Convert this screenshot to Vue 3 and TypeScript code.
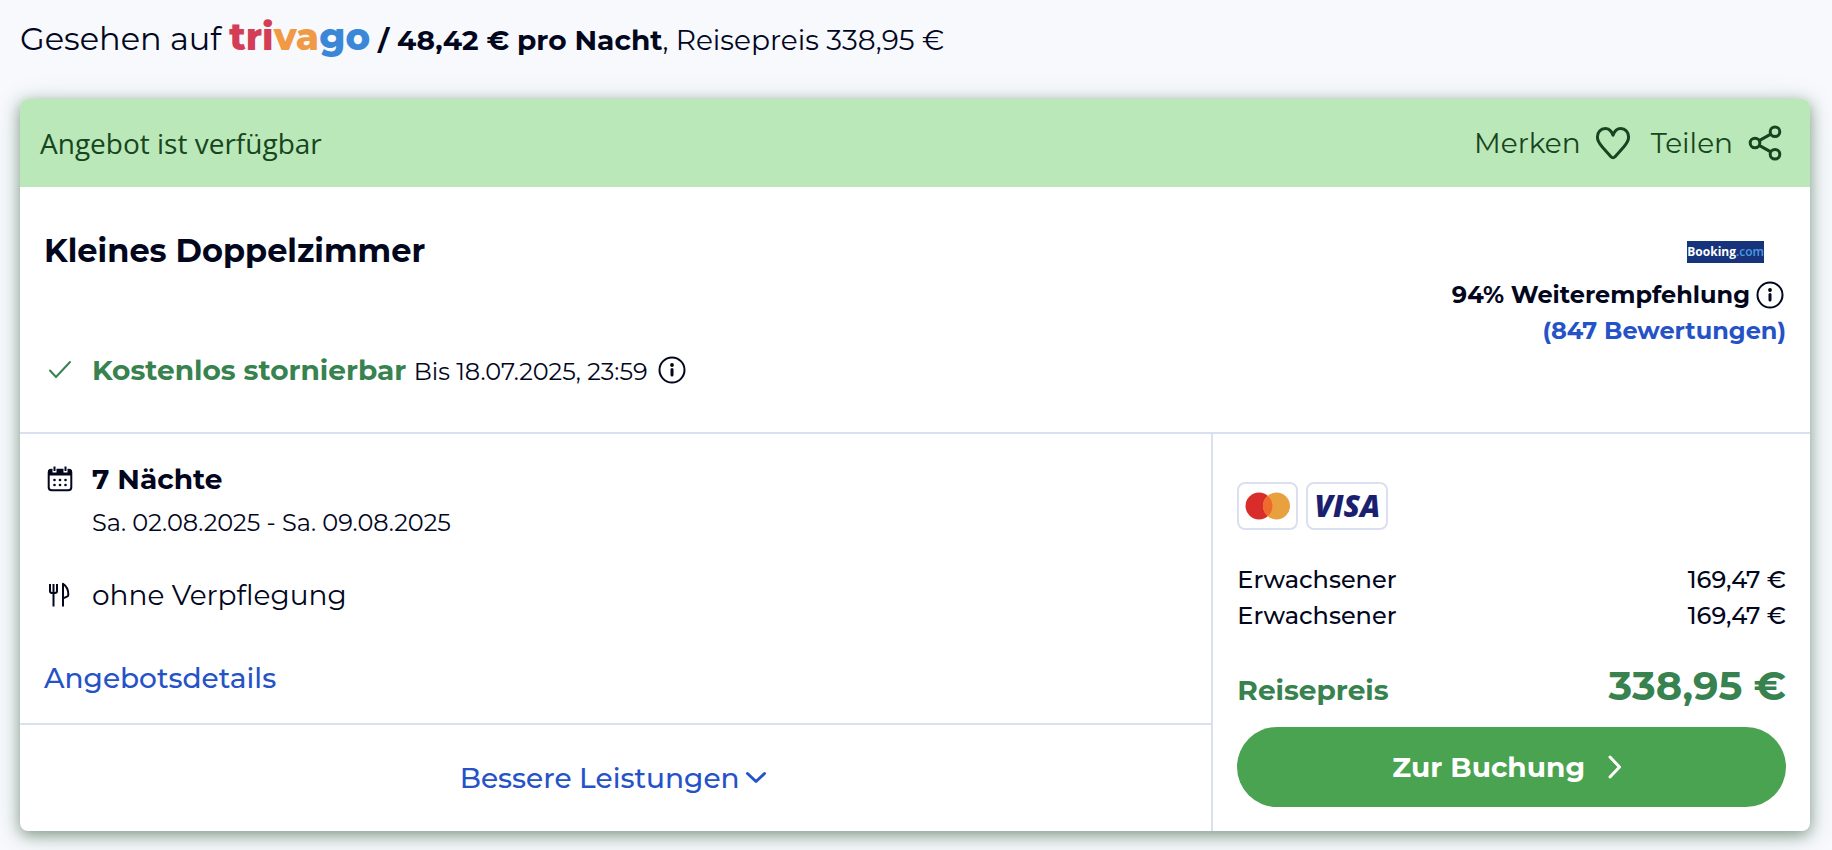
<script setup lang="ts">
interface Traveller {
  label: string
  price: string
}

const travellers: Traveller[] = [
  { label: 'Erwachsener', price: '169,47 €' },
  { label: 'Erwachsener', price: '169,47 €' },
]
</script>

<template>
  <main class="page">
    <header class="seen">
      <span class="seen-on">Gesehen auf</span>
      <span class="trivago"><span class="tri">tri</span><span class="va">va</span><span class="go">go</span></span>
      <p class="seen-price"><strong>/ 48,42 € pro Nacht</strong>, Reisepreis 338,95 €</p>
    </header>

    <article class="card">
      <div class="status">
        <span class="status-text">Angebot ist verfügbar</span>
        <div class="status-actions">
          <button type="button" class="action">
            Merken
            <svg class="action-icon" viewBox="0 0 36 36" aria-hidden="true">
              <path d="M18 10.2C16.4 5.6 13.6 3.6 10.3 3.6 5.6 3.6 2.4 7.3 2.4 12c0 4 2.2 6.9 4.9 9.9l8.9 10c1 1.200 2.600 1.200 3.600 0l8.900-10c2.700-3 4.900-5.900 4.900-9.900 0-4.700-3.200-8.400-7.900-8.400-3.300 0-6.100 2-7.700 6.600z" />
            </svg>
          </button>
          <button type="button" class="action">
            Teilen
            <svg class="action-icon" viewBox="0 0 36 36" aria-hidden="true">
              <circle cx="28" cy="6.800" r="4.800" />
              <circle cx="8" cy="18" r="4.800" />
              <circle cx="28" cy="29.200" r="4.800" />
              <path d="M12.200 15.600l11.600-6.500M12.200 20.400l11.600 6.500" />
            </svg>
          </button>
        </div>
      </div>

      <section class="room">
        <div class="room-main">
          <h1 class="room-title">Kleines Doppelzimmer</h1>
          <div class="row">
            <svg class="row-icon check" viewBox="0 0 32 32" aria-hidden="true">
              <path d="M6 16.500l6 6.500L26 8" />
            </svg>
            <p class="cancel"><strong>Kostenlos stornierbar</strong> <span>Bis 18.07.2025, 23:59</span></p>
            <button type="button" class="info info-cancel" aria-label="Information zur Stornierung">
              <svg viewBox="0 0 32 32" aria-hidden="true">
                <circle class="ring" cx="16" cy="16" r="12.500" />
                <circle cx="16" cy="11" r="1.900" />
                <path class="stem" d="M16 15.500v5.500" />
              </svg>
            </button>
          </div>
        </div>
        <div class="provider">
          <span class="booking">Booking<span class="booking-com">.com</span></span>
          <div class="recommend">
            <strong>94% Weiterempfehlung</strong>
            <button type="button" class="info" aria-label="Information zur Weiterempfehlung">
              <svg viewBox="0 0 32 32" aria-hidden="true">
                <circle class="ring" cx="16" cy="16" r="12.500" />
                <circle cx="16" cy="11" r="1.900" />
                <path class="stem" d="M16 15.500v5.500" />
              </svg>
            </button>
          </div>
          <a class="reviews" href="#bewertungen">(847 Bewertungen)</a>
        </div>
      </section>

      <div class="columns">
        <div class="left">
          <section class="stay">
            <div class="row">
              <svg class="row-icon" viewBox="0 0 32 32" aria-hidden="true">
                <rect class="line" x="4.700" y="6.700" width="22.600" height="20.600" rx="3" />
                <path d="M4 12.500V9A3 3 0 0 1 7 6h18A3 3 0 0 1 28 9v3.500z" />
                <path class="gap" d="M10.500 4v5.500M21.500 4v5.500" />
                <path class="line" d="M10.500 3.500v4.500M21.500 3.500v4.500" />
                <g>
                  <circle cx="10.500" cy="17" r="1.300" /><circle cx="16" cy="17" r="1.300" /><circle cx="21.500" cy="17" r="1.300" />
                  <circle cx="10.500" cy="22" r="1.300" /><circle cx="16" cy="22" r="1.300" /><circle cx="21.500" cy="22" r="1.300" />
                </g>
              </svg>
              <strong class="nights">7 Nächte</strong>
            </div>
            <p class="dates">Sa. 02.08.2025 - Sa. 09.08.2025</p>
            <div class="row board">
              <svg class="row-icon" viewBox="0 0 32 32" aria-hidden="true">
                <path class="line" d="M6 5v7c0 1.500 1 2 2 2h3c1 0 2-.5 2-2V5M9.500 5v22.500M19 27.500V4.800c3.500 2.200 5.500 6.200 5.300 11.200 0 1.200-.8 1.500-1.800 1.900l-3.500 1.500" />
              </svg>
              <span>ohne Verpflegung</span>
            </div>
            <a class="details" href="#angebotsdetails">Angebotsdetails</a>
          </section>
          <button type="button" class="upgrade">
            Bessere Leistungen
            <svg viewBox="0 0 24 24" aria-hidden="true"><path d="M3.500 7.500l8.500 8 8.500-8" /></svg>
          </button>
        </div>

        <section class="checkout">
          <div class="payments">
            <svg class="pay mastercard" viewBox="0 0 57 44" role="img" aria-label="Mastercard">
              <circle cx="20" cy="22" r="13.500" fill="#d92d2b" />
              <circle cx="37.500" cy="22" r="13.500" fill="#e9a13f" />
              <path d="M28.750 11.720a13.500 13.500 0 0 1 0 20.560 13.500 13.500 0 0 1 0-20.560z" fill="#ee6b2d" />
            </svg>
            <span class="pay visa">VISA</span>
          </div>
          <table class="prices">
            <tbody>
              <tr v-for="(t, i) in travellers" :key="i">
                <th scope="row">{{ t.label }}</th>
                <td>{{ t.price }}</td>
              </tr>
            </tbody>
          </table>
          <div class="total">
            <span class="total-label">Reisepreis</span>
            <span class="total-price">338,95 €</span>
          </div>
          <button type="button" class="book">
            Zur Buchung
            <svg viewBox="0 0 32 32" aria-hidden="true"><path d="M11 6l9.500 10L11 26" /></svg>
          </button>
        </section>
      </div>
    </article>
  </main>
</template>

<style>
body {
  margin: 0;
  background: #f7f9fd;
}
</style>

<style scoped>
.page {
  padding: 17px 22px 20px 20px;
  font-family: Montserrat, Inter, 'Open Sans', sans-serif;
  font-size: 28px;
  line-height: 36px;
  font-weight: 400;
  color: #02071d;
}

p,
h1 {
  margin: 0;
}

strong {
  font-weight: 700;
}

button {
  padding: 0;
  border: 0;
  background: none;
  font: inherit;
  color: inherit;
  cursor: pointer;
}

a {
  color: #2553c7;
  text-decoration: none;
}

svg {
  display: block;
  flex: none;
}

.seen {
  display: flex;
  align-items: baseline;
  gap: 8px;
}

.seen-on {
  font-size: 32px;
  line-height: 40px;
}

.trivago {
  font-size: 37px;
  line-height: 40px;
  font-weight: 800;
}

.tri {
  color: #d33d56;
}

.va {
  color: #f19a46;
}

.go {
  color: #3b87d7;
}

.card {
  margin-top: 40px;
  border-radius: 8px;
  overflow: hidden;
  background: #fff;
  box-shadow: 0 4px 16px rgba(20, 60, 20, 0.5), 0 4px 36px rgba(20, 90, 70, 0.08);
}

.status {
  display: flex;
  justify-content: space-between;
  align-items: center;
  min-height: 88px;
  padding: 0 27px 0 20px;
  background: #bae8b9;
  color: #174520;
}

.status-text {
  font-family: 'Open Sans', sans-serif;
}

.status-actions {
  display: flex;
  gap: 20px;
}

.action {
  display: flex;
  align-items: center;
  gap: 14px;
}

.action-icon {
  width: 36px;
  height: 36px;
  fill: none;
  stroke: currentColor;
  stroke-width: 3;
  stroke-linejoin: round;
}

.room {
  display: flex;
  justify-content: space-between;
  padding: 44px 24px;
  border-bottom: 2px solid #dae0ef;
}

.room-title {
  margin-bottom: 81px;
  font-size: 32px;
  line-height: 40px;
  font-weight: 700;
}

.row {
  display: flex;
  align-items: center;
}

.row-icon {
  width: 32px;
  height: 32px;
  margin-right: 16px;
  fill: currentColor;
}

.row-icon .line {
  fill: none;
  stroke: currentColor;
  stroke-width: 2;
  stroke-linejoin: round;
}

.row-icon .gap {
  stroke: #fff;
  stroke-width: 4;
}

.check {
  fill: none;
  stroke: #388250;
  stroke-width: 2;
  stroke-linecap: round;
}

.cancel strong {
  color: #388250;
}

.cancel span {
  font-size: 24px;
  line-height: 24px;
}

.info svg {
  width: 32px;
  height: 32px;
}

.info-cancel {
  margin-left: 8px;
}

.ring {
  fill: none;
  stroke: currentColor;
  stroke-width: 2;
}

.stem {
  stroke: currentColor;
  stroke-width: 3;
  stroke-linecap: round;
}

.provider {
  display: flex;
  flex-direction: column;
  align-items: flex-end;
  padding-top: 10px;
  font-size: 24px;
}

.booking {
  margin: 0 22px 14px 0;
  background: #17337c;
  color: #fff;
  font-family: 'Open Sans', sans-serif;
  font-size: 12px;
  line-height: 22px;
  font-weight: 700;
}

.booking-com {
  color: #479be0;
  font-weight: 600;
}

.recommend {
  display: flex;
  align-items: center;
  gap: 4px;
}

.reviews {
  font-weight: 700;
}

.columns {
  display: grid;
  grid-template-columns: 2fr 1fr;
}

.left {
  display: flex;
  flex-direction: column;
  border-right: 2px solid #dae0ef;
}

.stay {
  display: flex;
  flex-direction: column;
  align-items: flex-start;
  padding: 27px 24px;
  border-bottom: 2px solid #dae0ef;
}

.dates {
  margin: 8px 0 36px 48px;
  font-size: 24px;
}

.board {
  margin-bottom: 47px;
}

.details,
.upgrade {
  font-weight: 500;
}

.upgrade {
  flex: 1;
  display: flex;
  align-items: center;
  justify-content: center;
  gap: 4px;
  padding-right: 4px;
  color: #2553c7;
}

.upgrade svg {
  width: 24px;
  height: 24px;
  fill: none;
  stroke: currentColor;
  stroke-width: 3;
  stroke-linecap: round;
  stroke-linejoin: round;
}

.checkout {
  padding: 48px 24px 24px;
}

.payments {
  display: flex;
  gap: 8px;
}

.pay {
  box-sizing: border-box;
  height: 48px;
  border: 2px solid #dae0ef;
  border-radius: 8px;
}

.mastercard {
  width: 61px;
}

.visa {
  width: 82px;
  font-family: 'Open Sans', sans-serif;
  font-size: 30px;
  line-height: 44px;
  font-weight: 800;
  font-style: italic;
  text-align: center;
  color: #1b1f70;
}

.prices {
  width: 100%;
  margin: 32px 0 28px;
  border-collapse: collapse;
  font-size: 24px;
}

.prices th,
.prices td {
  padding: 0;
  font-weight: 500;
  text-align: left;
}

.prices td {
  text-align: right;
}

.total {
  display: flex;
  justify-content: space-between;
  align-items: baseline;
  font-weight: 700;
  color: #388250;
}

.total-price {
  font-size: 40px;
  line-height: 48px;
}

.book {
  display: flex;
  align-items: center;
  justify-content: center;
  gap: 14px;
  width: 100%;
  height: 80px;
  margin-top: 17px;
  border-radius: 40px;
  background: #4aa350;
  color: #fff;
  font-weight: 700;
}

.book svg {
  width: 32px;
  height: 32px;
  fill: none;
  stroke: currentColor;
  stroke-width: 3;
  stroke-linecap: round;
  stroke-linejoin: round;
}
</style>
